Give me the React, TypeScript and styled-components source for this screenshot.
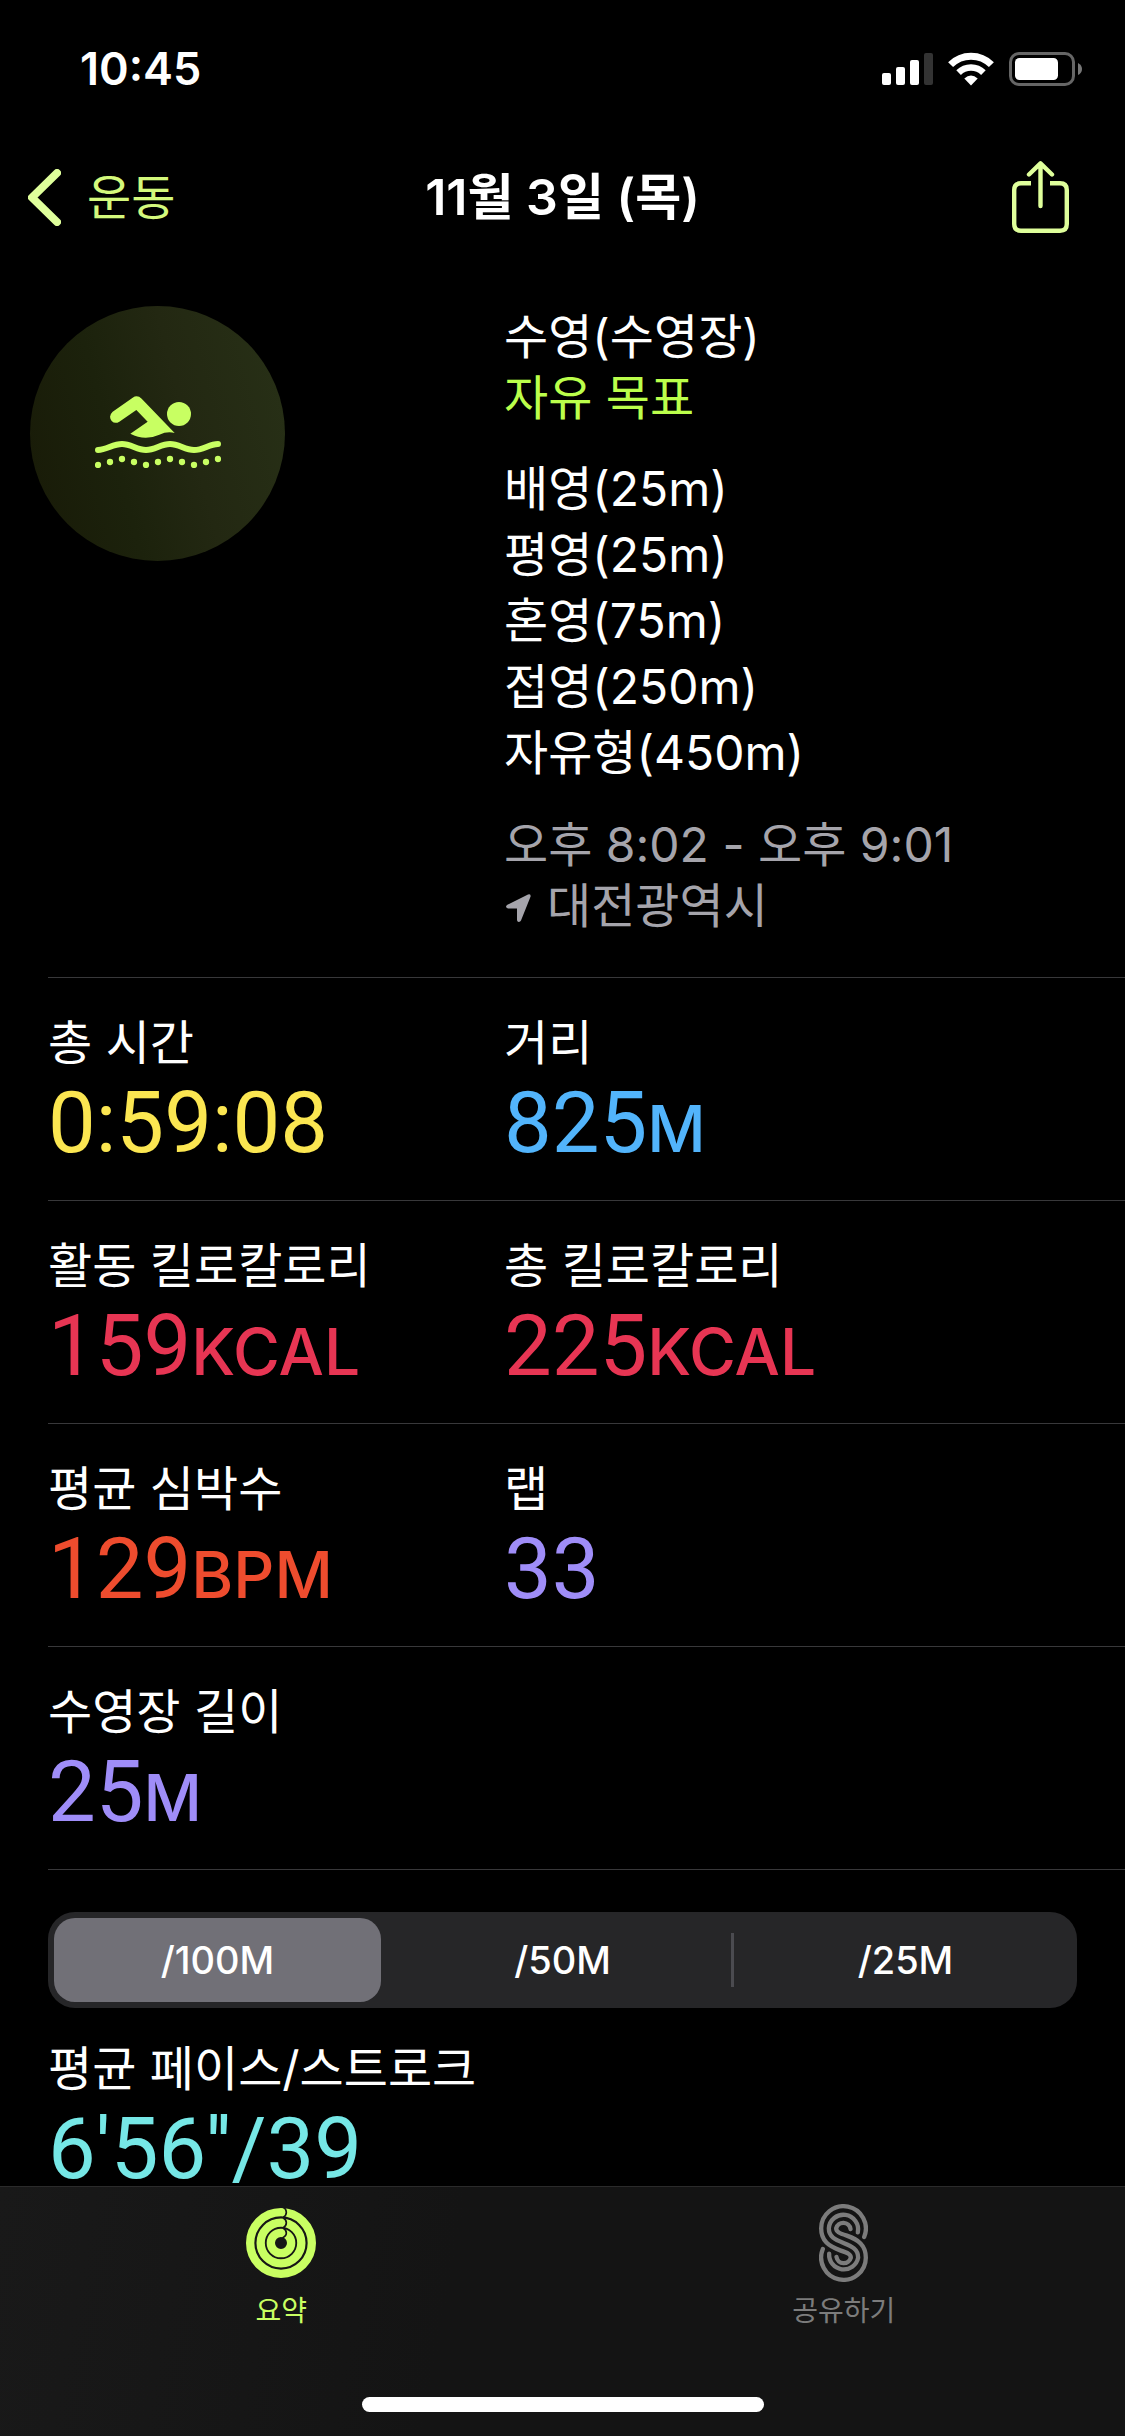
import React, { useState } from "react";
import styled, { createGlobalStyle } from "styled-components";

const GlobalStyle = createGlobalStyle`
  *, *::before, *::after { box-sizing: border-box; }
  body {
    margin: 0;
    background: #000;
    color: #fff;
    font-family: Inter, "Noto Sans CJK KR", sans-serif;
    font-size: 48px;
    line-height: 61px;
  }
  h1, h2, p, ul, dl, dt, dd { margin: 0; padding: 0; font: inherit; }
  ul { list-style: none; }
  button { font: inherit; color: inherit; background: none; border: 0; padding: 0; cursor: pointer; }
  svg { display: block; flex: none; }
`;

const Screen = styled.div`
  height: 100vh;
  display: grid;
  grid-template-rows: auto minmax(0, 1fr) auto;
`;

const StatusBar = styled.div`
  display: flex;
  justify-content: space-between;
  align-items: center;
  height: 137px;
  padding: 0 43px 0 80px;
`;

const Clock = styled.time`
  font-size: 45px;
  font-weight: 600;
`;

const StatusIcons = styled.div`
  display: flex;
  align-items: center;
  gap: 15px;
`;

const NavBar = styled.nav`
  display: grid;
  grid-template-columns: 1fr auto 1fr;
  align-items: center;
  height: 120px;
  padding: 0 28px;
`;

const BackButton = styled.button`
  display: flex;
  align-items: center;
  gap: 26px;
  justify-self: start;
  color: #d4f97c;
`;

const NavTitle = styled.h1`
  font-size: 50px;
  font-weight: 600;
`;

const ShareButton = styled.button`
  justify-self: end;
  padding-right: 28px;
`;

const Content = styled.main`
  overflow-y: auto;
  scrollbar-width: none;
`;

const Hero = styled.header`
  display: grid;
  grid-template-columns: 474px 1fr;
  align-items: start;
  padding: 49px 30px 41px;
`;

const Badge = styled.div`
  display: grid;
  place-items: center;
  width: 255px;
  height: 255px;
  padding-bottom: 4px;
  border-radius: 50%;
  background: linear-gradient(75deg, #181a07, #1c220c 35%, #232812 60%, #283117);
`;

const Details = styled.div`
  display: grid;
  gap: 28px;
`;

const Goal = styled.p`
  color: #bbff4b;
`;

const Stroke = styled.li`
  line-height: 66px;
`;

const Muted = styled.div`
  color: #a5a4ab;
`;

const Place = styled.p`
  display: flex;
  align-items: center;
  gap: 16px;
  padding-left: 2px;

  svg { margin-top: 4px; }
`;

const StatRow = styled.dl`
  display: grid;
  grid-template-columns: 456px 1fr;
  margin-left: 48px;
  padding: 34px 0 27px;
  border-top: 1px solid #38383a;
`;

const Value = styled.dd<{ $color: string }>`
  color: ${(p) => p.$color};
  font-family: Roboto, sans-serif;
  font-size: 85px;
  line-height: 100px;
`;

const Unit = styled.span`
  font-family: Inter, sans-serif;
  font-size: 64px;
  font-weight: 500;
  line-height: 64px;
`;

const PaceSection = styled.section`
  margin-left: 48px;
  padding: 42px 48px 29px 0;
  border-top: 1px solid #38383a;
`;

const Segments = styled.div`
  display: grid;
  grid-template-columns: repeat(3, 1fr);
  height: 96px;
  margin-bottom: 30px;
  border-radius: 27px;
  background: #262628;
`;

const Segment = styled.label<{ $divided: boolean }>`
  display: grid;
  align-items: center;
  justify-items: center;
  padding: 6px 8px;
  font-size: 38px;
  font-weight: 500;
  cursor: pointer;
  background: ${(p) =>
    p.$divided
      ? "linear-gradient(#4b4b50, #4b4b50) right center / 3px 54px no-repeat"
      : "none"};

  &:first-child { padding: 6px 10px 6px 6px; }
  > * { grid-area: 1 / 1; }
`;

const SegmentInput = styled.input`
  appearance: none;
  width: 100%;
  height: 100%;
  margin: 0;
  border-radius: 21px;
  cursor: pointer;
  &:checked { background: #717077; }
`;

const SegmentText = styled.span`
  pointer-events: none;
  z-index: 1;
`;

const TabBar = styled.footer`
  display: flex;
  flex-direction: column;
  justify-content: space-between;
  align-items: center;
  height: 250px;
  padding-bottom: 24px;
  border-top: 1px solid #2b2b2b;
  background: linear-gradient(100deg, #191919, #141414 40%);
`;

const Tabs = styled.nav`
  display: grid;
  grid-template-columns: 1fr 1fr;
  width: 100%;
  padding-top: 16px;
`;

const Tab = styled.button<{ $active: boolean }>`
  display: grid;
  justify-items: center;
  gap: 8px;
  font-size: 28px;
  line-height: 40px;
  color: ${(p) => (p.$active ? "#c9ff62" : "#7c7c7c")};
`;

const TabIcon = styled.span`
  display: grid;
  place-items: center;
  height: 80px;
`;

const HomeIndicator = styled.div`
  width: 402px;
  height: 15px;
  border-radius: 8px;
  background: #fff;
`;

const SignalIcon = () => (
  <svg width="51" height="32" viewBox="0 0 51 32" fill="#fff" aria-hidden="true">
    <rect x="0" y="20" width="9" height="12" rx="2" />
    <rect x="14" y="14" width="9" height="18" rx="2" />
    <rect x="28" y="7" width="9" height="25" rx="2" />
    <rect x="42" y="0" width="9" height="32" rx="2" fill="#333" />
  </svg>
);

const WifiIcon = () => (
  <svg width="46" height="34" viewBox="0 0 46 34" fill="none" stroke="#fff" aria-hidden="true">
    <path d="M2.6 12.6A28.8 28.8 0 0 1 43.4 12.6" strokeWidth="7" />
    <path d="M10.6 20.6A17.5 17.5 0 0 1 35.4 20.6" strokeWidth="6.5" />
    <path d="M23 33.5L16.3 26.4Q23 20.6 29.7 26.4Z" fill="#fff" stroke="none" />
  </svg>
);

const BatteryIcon = () => (
  <svg width="73" height="34" viewBox="0 0 73 34" aria-hidden="true">
    <rect x="1.5" y="1.5" width="63" height="31" rx="8.5" fill="none" stroke="#666" strokeWidth="3" />
    <rect x="6" y="6" width="43" height="22" rx="4.5" fill="#fff" />
    <path d="M69 11Q73 13 73 17T69 23Z" fill="#777" />
  </svg>
);

const ChevronIcon = () => (
  <svg width="33" height="57" viewBox="0 0 33 57" fill="none" stroke="#dfff9b" strokeWidth="8" strokeLinecap="round" strokeLinejoin="round" aria-hidden="true">
    <path d="M29 4L4 28.5L29 53" />
  </svg>
);

const ShareIcon = () => (
  <svg width="57" height="72" viewBox="0 0 57 72" fill="none" stroke="#dfff9b" strokeWidth="4.4" aria-hidden="true">
    <path d="M19 22.3H9Q2.2 22.3 2.2 29V63Q2.2 69.7 9 69.7H48Q54.8 69.7 54.8 63V29Q54.8 22.3 48 22.3H38" />
    <path d="M28.5 45V3M17 13.5L28.5 2.4L40 13.5" strokeLinecap="round" strokeLinejoin="round" />
  </svg>
);

const SwimIcon = () => (
  <svg width="126" height="72" viewBox="285 345 378 216" fill="#c8ff62" aria-hidden="true">
    <circle cx="537" cy="399" r="36" />
    <path d="M338 392L398 350Q412 340 425 353L524 456Q502 450 478 461Q434 481 391 458L443 422L409 387L358 422Q345 430 335 420Q324 405 338 392Z" />
    <path d="M294 507C320 507 338 489 366 489S410 507 438 507S482 489 510 489S554 507 582 507S628 489 654 489" fill="none" stroke="#c8ff62" strokeWidth="18" strokeLinecap="round" />
    {[552, 543, 534, 543, 552, 543, 534, 543, 552, 543, 534].map((y, i) => (
      <circle key={i} cx={294 + i * 36} cy={y} r="9.5" />
    ))}
  </svg>
);

const LocationIcon = () => (
  <svg width="25" height="28" viewBox="0 0 25 28" fill="#a5a4ab" aria-hidden="true">
    <path d="M22 .6Q25 -.6 24.6 2.6L15 26.5Q14 28.4 12 27.8Q11 27.4 11 25.8V14.4H2Q.2 14.2 0 12.8Q0 11.6 1.4 10.8Z" />
  </svg>
);

const RingsIcon = () => (
  <svg width="70" height="70" viewBox="0 0 210 210" fill="none" aria-hidden="true">
    <g stroke="#c9ff62" strokeWidth="25">
      <circle cx="105" cy="105" r="92.5" />
      <circle cx="105" cy="105" r="61" />
      <circle cx="105" cy="105" r="30.5" />
    </g>
    <g stroke="#171717" strokeWidth="5">
      <path d="M112 -2Q121 3 121 13T112 28" />
      <path d="M112 30Q121 35 121 44T112 59" />
      <path d="M112 61Q121 66 121 75T109 90" />
    </g>
  </svg>
);

const SharingIcon = () => (
  <svg width="49" height="78" viewBox="177 102 146 234" fill="none" stroke="#7c7c7c" strokeWidth="13" strokeLinecap="round" aria-hidden="true">
    <path d="M312 201A67 67 0 1 0 183 175C183 213 206 229 240 241C264 249 272 253 272 263A22 22 0 0 1 229 261" />
    <path d="M293 187A44 44 0 1 0 206 175C206 201 225 209 250 219C275 229 294 237 294 263A44 44 0 0 1 207 251" />
    <path transform="rotate(180 250 219)" d="M312 201A67 67 0 1 0 183 175C183 213 206 229 240 241C264 249 272 253 272 263A22 22 0 0 1 229 261" />
  </svg>
);

type Stat = { label: string; value: string; unit?: string; color: string };

const rows: Stat[][] = [
  [
    { label: "총 시간", value: "0:59:08", color: "#fbe651" },
    { label: "거리", value: "825", unit: "M", color: "#52b4fb" },
  ],
  [
    { label: "활동 킬로칼로리", value: "159", unit: "KCAL", color: "#e73553" },
    { label: "총 킬로칼로리", value: "225", unit: "KCAL", color: "#e73553" },
  ],
  [
    { label: "평균 심박수", value: "129", unit: "BPM", color: "#ee4c2e" },
    { label: "랩", value: "33", color: "#9f8df8" },
  ],
  [{ label: "수영장 길이", value: "25", unit: "M", color: "#9f8df8" }],
];

const strokes = ["배영(25m)", "평영(25m)", "혼영(75m)", "접영(250m)", "자유형(450m)"];
const splits = ["/100M", "/50M", "/25M"];

export default function App() {
  const [split, setSplit] = useState(0);
  const [tab, setTab] = useState(0);

  return (
    <Screen>
      <GlobalStyle />
      <div>
        <StatusBar>
          <Clock>10:45</Clock>
          <StatusIcons>
            <SignalIcon />
            <WifiIcon />
            <BatteryIcon />
          </StatusIcons>
        </StatusBar>
        <NavBar>
          <BackButton>
            <ChevronIcon />
            운동
          </BackButton>
          <NavTitle>11월 3일 (목)</NavTitle>
          <ShareButton aria-label="공유">
            <ShareIcon />
          </ShareButton>
        </NavBar>
      </div>

      <Content>
        <Hero>
          <Badge>
            <SwimIcon />
          </Badge>
          <Details>
            <div>
              <h2>수영(수영장)</h2>
              <Goal>자유 목표</Goal>
            </div>
            <ul>
              {strokes.map((s) => (
                <Stroke key={s}>{s}</Stroke>
              ))}
            </ul>
            <Muted>
              <p>오후 8:02 - 오후 9:01</p>
              <Place>
                <LocationIcon />
                대전광역시
              </Place>
            </Muted>
          </Details>
        </Hero>

        {rows.map((row) => (
          <StatRow key={row[0].label}>
            {row.map((s) => (
              <div key={s.label}>
                <dt>{s.label}</dt>
                <Value $color={s.color}>
                  {s.value}
                  {s.unit && <Unit>{s.unit}</Unit>}
                </Value>
              </div>
            ))}
          </StatRow>
        ))}

        <PaceSection>
          <Segments role="radiogroup">
            {splits.map((name, i) => (
              <Segment key={name} $divided={i < 2 && i !== split && i + 1 !== split}>
                <SegmentInput type="radio" name="split" checked={i === split} onChange={() => setSplit(i)} />
                <SegmentText>{name}</SegmentText>
              </Segment>
            ))}
          </Segments>
          <dl>
            <dt>평균 페이스/스트로크</dt>
            <Value $color="#76e7e6">6'56''/39</Value>
          </dl>
        </PaceSection>
      </Content>

      <TabBar>
        <Tabs>
          <Tab $active={tab === 0} onClick={() => setTab(0)}>
            <TabIcon>
              <RingsIcon />
            </TabIcon>
            요약
          </Tab>
          <Tab $active={tab === 1} onClick={() => setTab(1)}>
            <TabIcon>
              <SharingIcon />
            </TabIcon>
            공유하기
          </Tab>
        </Tabs>
        <HomeIndicator />
      </TabBar>
    </Screen>
  );
}
